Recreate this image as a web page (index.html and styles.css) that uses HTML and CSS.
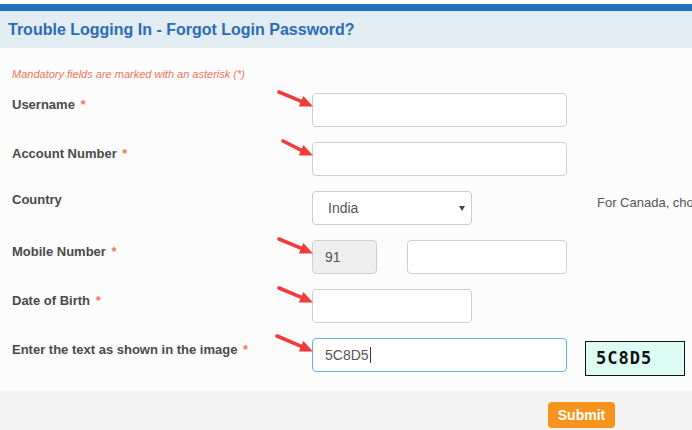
FILE: index.html
```html
<!DOCTYPE html>
<html lang="en">
<head>
  <meta charset="UTF-8" />
  <title>Forgot Login Password</title>
  <link rel="stylesheet" href="styles.css">
</head>
<body>
  <div class="topbar"></div>
  <h1 class="title">Trouble Logging In - Forgot Login Password?</h1>

  <form class="form">
    <p class="note">Mandatory fields are marked with an asterisk (*)</p>

    <div class="row">
      <label class="label">Username <span class="req">*</span></label>
      <div class="field">
        <svg class="arrow" viewBox="0 0 40 20"><line x1="3" y1="3" x2="26" y2="12.6"/><polygon points="22.8,17.4 27.4,7 37,17.5"/></svg>
        <input type="text" class="input wide">
      </div>
    </div>

    <div class="row">
      <label class="label">Account Number <span class="req">*</span></label>
      <div class="field">
        <svg class="arrow" viewBox="0 0 40 20"><line x1="7" y1="3" x2="26" y2="12.6"/><polygon points="22.8,17.4 27.4,7 37,17.5"/></svg>
        <input type="text" class="input wide">
      </div>
    </div>

    <div class="row">
      <label class="label label-plain">Country</label>
      <div class="field">
        <div class="select">
          <select class="input">
            <option>India</option>
          </select>
        </div>
        <span class="hint">For Canada, choose United States of America</span>
      </div>
    </div>

    <div class="row">
      <label class="label">Mobile Number <span class="req">*</span></label>
      <div class="field">
        <svg class="arrow" viewBox="0 0 40 20"><line x1="3" y1="3" x2="26" y2="12.6"/><polygon points="22.8,17.4 27.4,7 37,17.5"/></svg>
        <input type="text" class="input code" value="91" readonly>
        <input type="text" class="input mid">
      </div>
    </div>

    <div class="row">
      <label class="label">Date of Birth <span class="req">*</span></label>
      <div class="field">
        <svg class="arrow" viewBox="0 0 40 20"><line x1="3" y1="3" x2="26" y2="12.6"/><polygon points="22.8,17.4 27.4,7 37,17.5"/></svg>
        <input type="text" class="input mid">
      </div>
    </div>

    <div class="row">
      <label class="label">Enter the text as shown in the image <span class="req">*</span></label>
      <div class="field">
        <svg class="arrow" viewBox="0 0 40 20"><line x1="1" y1="2" x2="26" y2="12.6"/><polygon points="22.8,17.4 27.4,7 37,17.5"/></svg>
        <div class="input wide focus">5C8D5<span class="caret"></span></div>
        <div class="captcha">5C8D5</div>
      </div>
    </div>
  </form>

  <div class="footer">
    <button type="button" class="submit">Submit</button>
  </div>
</body>
</html>
```

FILE: styles.css
```css
html, body {
  overflow: hidden;
}
body {
  margin: 0;
  background: #fcfcfc;
  font-family: "Liberation Sans", Arial, sans-serif;
  color: #444;
}
.topbar {
  margin-top: 4px;
  height: 7px;
  background: #1b72bb;
}
.title {
  margin: 0;
  height: 37px;
  line-height: 37px;
  padding-left: 8px;
  background: #e1edf2;
  color: #2b6cb3;
  font-size: 16px;
  font-weight: bold;
}
.form {
  margin: 0;
  padding: 20px 0 0 12px;
}
.note {
  margin: 0 0 12px;
  font-size: 11px;
  line-height: 13px;
  font-style: italic;
  color: #f0755a;
}
.row {
  display: flex;
  margin-bottom: 15px;
}
.label {
  width: 300px;
  flex: none;
  padding-top: 4px;
  font-size: 13px;
  line-height: 15px;
  font-weight: bold;
  color: #4a4a4a;
}
.label-plain {
  padding-top: 1px;
}
.req {
  color: #f0755a;
  margin-left: 2px;
}
.field {
  position: relative;
  display: flex;
  align-items: flex-start;
  white-space: nowrap;
}
.arrow {
  position: absolute;
  left: -36px;
  top: -4px;
  width: 40px;
  height: 20px;
  overflow: visible;
}
.arrow line {
  stroke: #f23c3c;
  stroke-width: 3.6;
  stroke-linecap: round;
}
.arrow polygon {
  fill: #f23c3c;
}
.input {
  box-sizing: border-box;
  height: 34px;
  border: 1px solid #cfcfcf;
  border-radius: 4px;
  background: #fff;
  font-family: "Liberation Sans", Arial, sans-serif;
  font-size: 14px;
  color: #555;
  padding: 0 12px;
  outline: none;
}
.wide {
  width: 255px;
}
.mid {
  width: 160px;
}
.code {
  width: 65px;
  background: #eee;
  margin-right: 30px;
}
.focus {
  display: flex;
  align-items: center;
  border-color: #66aff0;
}
.caret {
  display: inline-block;
  width: 1px;
  height: 16px;
  margin-left: 1px;
  background: #333;
}
.select {
  position: relative;
}
.select select {
  width: 160px;
  padding-left: 15px;
  appearance: none;
  -webkit-appearance: none;
}
.select::after {
  content: "";
  position: absolute;
  right: 7px;
  top: 15px;
  border-left: 3.5px solid transparent;
  border-right: 3.5px solid transparent;
  border-top: 5px solid #444;
}
.hint {
  margin-left: 125px;
  padding-top: 4px;
  font-size: 13px;
  line-height: 15px;
  color: #555;
}
.captcha {
  box-sizing: border-box;
  margin: 3px 0 0 18px;
  width: 100px;
  height: 35px;
  padding-left: 10px;
  border: 1px solid #111;
  background: #ddfcf4;
  font-family: "DejaVu Sans Mono", monospace;
  font-weight: bold;
  font-size: 17px;
  line-height: 33px;
  letter-spacing: 1px;
  color: #111;
}
.footer {
  margin-top: 3px;
  height: 40px;
  padding: 11px 0 0 548px;
  background: #f4f4f4;
}
.submit {
  width: 67px;
  height: 26px;
  padding: 0;
  border: none;
  border-radius: 4px;
  background: #f7941d;
  color: #fff;
  font-family: "Liberation Sans", Arial, sans-serif;
  font-size: 14px;
  font-weight: bold;
}
```
